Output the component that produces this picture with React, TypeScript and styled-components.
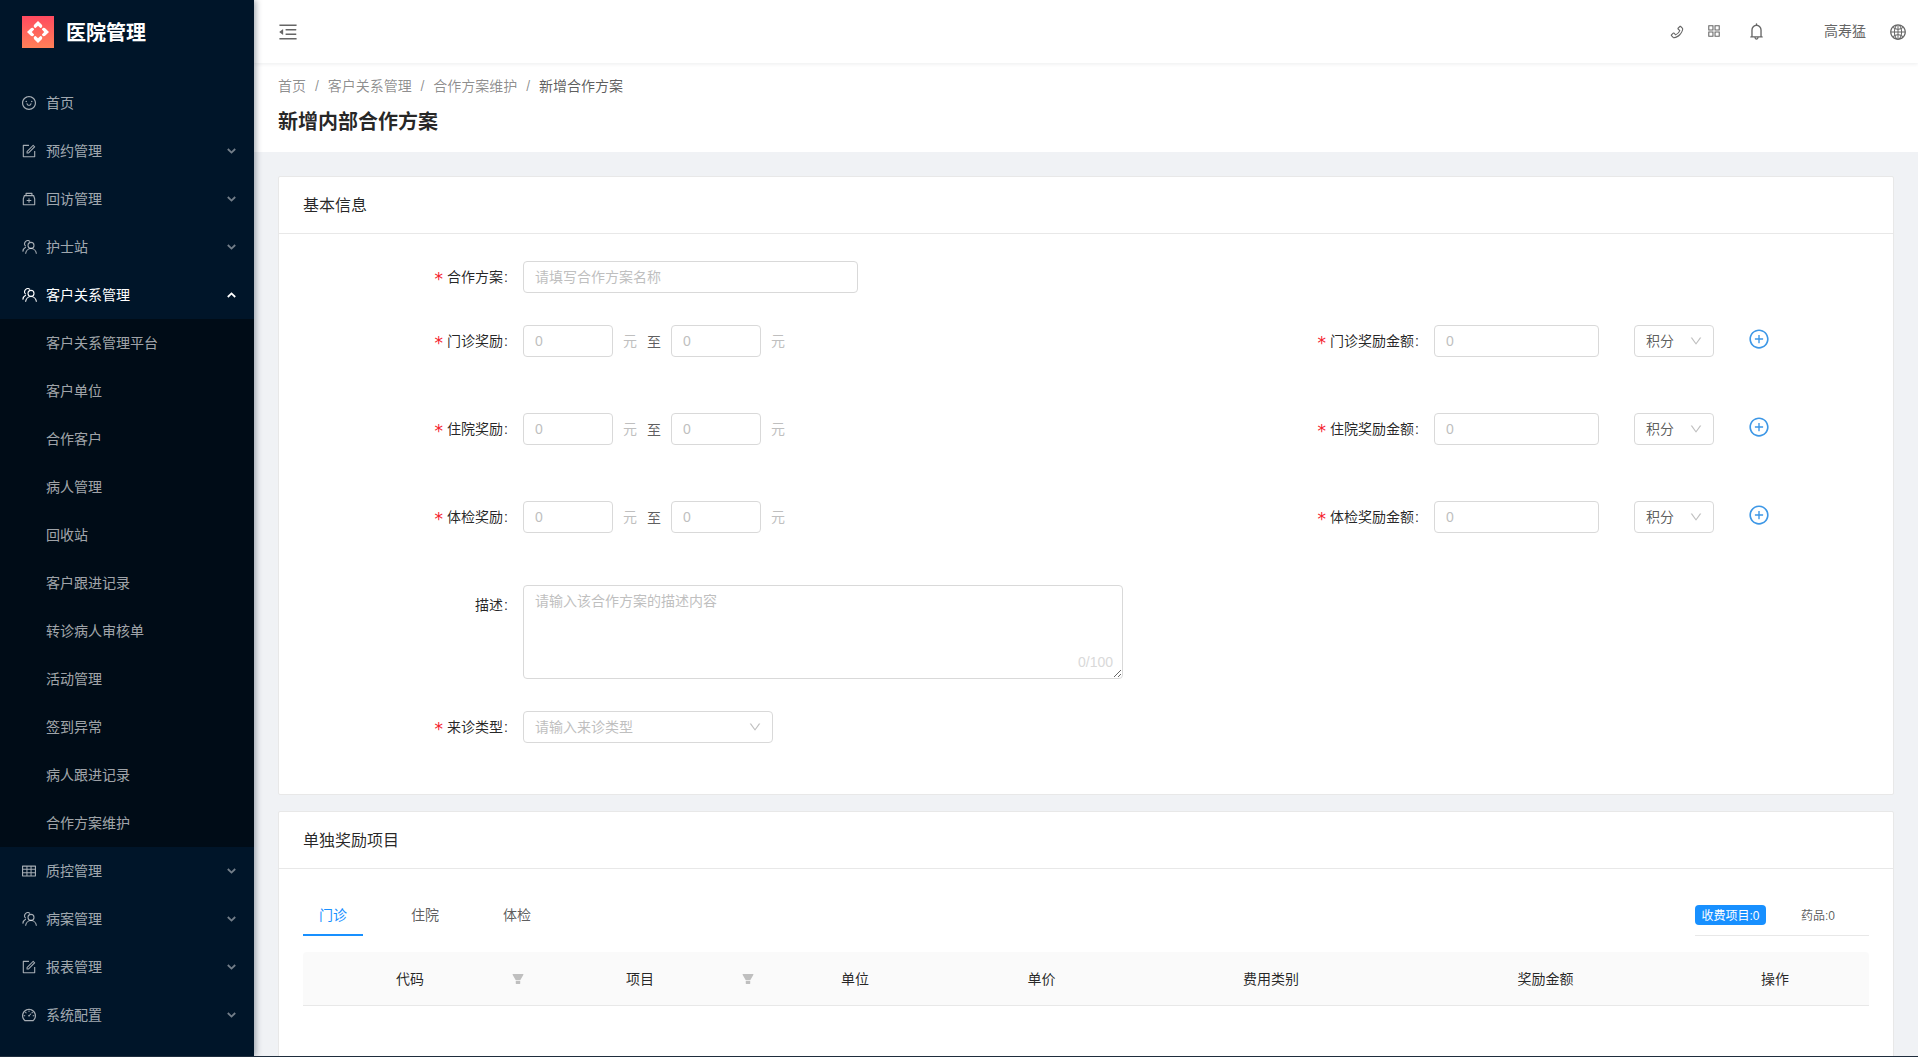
import React from "react";
import styled, { createGlobalStyle } from "styled-components";
import {
    AiFillFilter,
    AiOutlineAppstore,
    AiOutlineBell,
    AiOutlineDashboard,
    AiOutlineDown,
    AiOutlineForm,
    AiOutlineGlobal,
    AiOutlineMedicineBox,
    AiOutlineMenuFold,
    AiOutlinePhone,
    AiOutlinePlusCircle,
    AiOutlineSmile,
    AiOutlineTable,
} from "react-icons/ai";

const FONT = `"Liberation Sans", "Noto Sans CJK SC", sans-serif`;

const GlobalStyle = createGlobalStyle`
    html, body {
        margin: 0;
        padding: 0;
        height: 100%;
        overflow: hidden;
        background: #f0f2f5;
        font-family: ${FONT};
        font-size: 14px;
        color: rgba(0, 0, 0, 0.65);
    }
    * {
        box-sizing: border-box;
    }
`;

function PeopleIcon() {
    return (
        <svg width="15" height="15" viewBox="0 0 15 15" fill="none" stroke="currentColor" strokeWidth="1.1">
            <circle cx="9" cy="5.4" r="3" />
            <path d="M3.6 13.8c.3-2.9 2.5-5.3 5.4-5.3s5.1 2.4 5.4 5.3" />
            <path d="M8 1.5A3 3 0 0 0 3.7 6.2" />
            <path d="M3.9 6.9C2.2 7.8 1 9.6.8 11.6" />
        </svg>
    );
}

function Logo() {
    const petal =
        "M16 5l3.6 3.6c1 1 .9 2.7-.3 3.2l-.9.3L16 9.8l-2.4 2.3-.9-.3c-1.2-.5-1.3-2.2-.3-3.2z";
    return (
        <svg width="32" height="32" viewBox="0 0 32 32">
            <defs>
                <linearGradient id="logoBg" x1="0" y1="0" x2="0" y2="1">
                    <stop offset="0" stopColor="#ff4a60" />
                    <stop offset="1" stopColor="#ff8058" />
                </linearGradient>
            </defs>
            <rect width="32" height="32" fill="url(#logoBg)" />
            {[0, 90, 180, 270].map((deg) => (
                <path key={deg} d={petal} fill="#fff" transform={`rotate(${deg} 16 16)`} />
            ))}
        </svg>
    );
}

function MenuArrow({ open }: { open?: boolean }) {
    return (
        <ArrowBox $open={open}>
            <svg width="9" height="6" viewBox="0 0 9 6" fill="none" stroke="currentColor" strokeWidth="1.8">
                <path d="M.8 1l3.7 3.6L8.2 1" />
            </svg>
        </ArrowBox>
    );
}

const topMenusBefore = [
    { label: "首页", icon: <AiOutlineSmile />, arrow: false },
    { label: "预约管理", icon: <AiOutlineForm />, arrow: true },
    { label: "回访管理", icon: <AiOutlineMedicineBox />, arrow: true },
    { label: "护士站", icon: <PeopleIcon />, arrow: true },
];

const subMenus = [
    "客户关系管理平台",
    "客户单位",
    "合作客户",
    "病人管理",
    "回收站",
    "客户跟进记录",
    "转诊病人审核单",
    "活动管理",
    "签到异常",
    "病人跟进记录",
    "合作方案维护",
];

const topMenusAfter = [
    { label: "质控管理", icon: <AiOutlineTable />, arrow: true },
    { label: "病案管理", icon: <PeopleIcon />, arrow: true },
    { label: "报表管理", icon: <AiOutlineForm />, arrow: true },
    { label: "系统配置", icon: <AiOutlineDashboard />, arrow: true },
];

function SideMenu() {
    return (
        <Sider>
            <LogoRow>
                <Logo />
                <LogoText>医院管理</LogoText>
            </LogoRow>
            <MenuList>
                {topMenusBefore.map((m) => (
                    <MenuItem key={m.label}>
                        <MenuIcon>{m.icon}</MenuIcon>
                        <MenuText>{m.label}</MenuText>
                        {m.arrow && <MenuArrow />}
                    </MenuItem>
                ))}
                <MenuItem $active>
                    <MenuIcon>
                        <PeopleIcon />
                    </MenuIcon>
                    <MenuText>客户关系管理</MenuText>
                    <MenuArrow open />
                </MenuItem>
                <SubMenu>
                    {subMenus.map((s) => (
                        <SubMenuItem key={s}>{s}</SubMenuItem>
                    ))}
                </SubMenu>
                {topMenusAfter.map((m) => (
                    <MenuItem key={m.label}>
                        <MenuIcon>{m.icon}</MenuIcon>
                        <MenuText>{m.label}</MenuText>
                        {m.arrow && <MenuArrow />}
                    </MenuItem>
                ))}
            </MenuList>
        </Sider>
    );
}

function TopBar() {
    return (
        <Header>
            <FoldIcon>
                <AiOutlineMenuFold />
            </FoldIcon>
            <HeaderRight>
                <HeaderIcon $size={16} $left={0}>
                    <AiOutlinePhone />
                </HeaderIcon>
                <HeaderIcon $size={16} $left={21} $up={2}>
                    <AiOutlineAppstore />
                </HeaderIcon>
                <HeaderIcon $size={19} $left={25}>
                    <AiOutlineBell />
                </HeaderIcon>
                <UserName>高寿猛</UserName>
                <HeaderIcon $size={18} $left={23}>
                    <AiOutlineGlobal />
                </HeaderIcon>
            </HeaderRight>
        </Header>
    );
}

function RewardRow({ name, bottom }: { name: string; bottom: number }) {
    return (
        <FormRow $bottom={bottom}>
            <FieldLabel $required>{name}奖励</FieldLabel>
            <SmallInput placeholder="0" />
            <Unit>元</Unit>
            <Between>至</Between>
            <SmallInput placeholder="0" />
            <Unit>元</Unit>
            <RightGroup>
                <FieldLabel $required $width={169}>
                    {name}奖励金额
                </FieldLabel>
                <AmountInput placeholder="0" />
                <UnitSelect>
                    <SelectText>积分</SelectText>
                    <SelectArrow>
                        <AiOutlineDown />
                    </SelectArrow>
                </UnitSelect>
                <AddButton>
                    <AiOutlinePlusCircle />
                </AddButton>
            </RightGroup>
        </FormRow>
    );
}

function BaseInfoCard() {
    return (
        <Card>
            <CardTitle>基本信息</CardTitle>
            <FormBody>
                <FormRow $bottom={32}>
                    <FieldLabel $required>合作方案</FieldLabel>
                    <NameInput placeholder="请填写合作方案名称" />
                </FormRow>
                <RewardRow name="门诊" bottom={56} />
                <RewardRow name="住院" bottom={56} />
                <RewardRow name="体检" bottom={52} />
                <FormRow $bottom={32} $top>
                    <DescLabel>描述</DescLabel>
                    <TextAreaWrap>
                        <DescArea placeholder="请输入该合作方案的描述内容" />
                        <Counter>0/100</Counter>
                    </TextAreaWrap>
                </FormRow>
                <FormRow $bottom={0}>
                    <FieldLabel $required>来诊类型</FieldLabel>
                    <VisitSelect>
                        <SelectText>请输入来诊类型</SelectText>
                        <SelectArrow>
                            <AiOutlineDown />
                        </SelectArrow>
                    </VisitSelect>
                </FormRow>
            </FormBody>
        </Card>
    );
}

const columns = [
    { title: "代码", filter: true, pad: 16 },
    { title: "项目", filter: true, pad: 16 },
    { title: "单位", pad: 0 },
    { title: "单价", pad: 0 },
    { title: "费用类别", pad: 0 },
    { title: "奖励金额", pad: 0 },
    { title: "操作", pad: 4 },
];

function RewardItemsCard() {
    return (
        <Card>
            <CardTitle>单独奖励项目</CardTitle>
            <TableBody>
                <TabsRow>
                    <Tabs>
                        <Tab $active>门诊</Tab>
                        <Tab>住院</Tab>
                        <Tab>体检</Tab>
                    </Tabs>
                    <Counts>
                        <CountBadge>收费项目:0</CountBadge>
                        <CountText>药品:0</CountText>
                    </Counts>
                </TabsRow>
                <TableHead>
                    {columns.map((c) => (
                        <HeadCell key={c.title} $pad={c.pad}>
                            {c.title}
                            {c.filter && (
                                <FilterMark>
                                    <AiFillFilter />
                                </FilterMark>
                            )}
                        </HeadCell>
                    ))}
                </TableHead>
            </TableBody>
        </Card>
    );
}

export default function App() {
    return (
        <>
            <GlobalStyle />
            <Shell>
                <SideMenu />
                <Main>
                    <TopBar />
                    <PageHead>
                        <Breadcrumb>
                            <Crumb>首页</Crumb>
                            <Slash>/</Slash>
                            <Crumb>客户关系管理</Crumb>
                            <Slash>/</Slash>
                            <Crumb>合作方案维护</Crumb>
                            <Slash>/</Slash>
                            <Crumb $current>新增合作方案</Crumb>
                        </Breadcrumb>
                        <PageTitle>新增内部合作方案</PageTitle>
                    </PageHead>
                    <Content>
                        <BaseInfoCard />
                        <RewardItemsCard />
                    </Content>
                </Main>
            </Shell>
            <BottomEdge />
        </>
    );
}

const Shell = styled.div`
    display: flex;
    height: 1056px;
    overflow: hidden;
`;

const BottomEdge = styled.div`
    height: 1px;
    background: #1f2d3d;
`;

// 左侧菜单
const Sider = styled.aside`
    flex: 0 0 254px;
    background: #001529;
    color: rgba(255, 255, 255, 0.65);
    box-shadow: 2px 0 6px rgba(0, 21, 41, 0.35);
    position: relative;
    z-index: 2;
`;

const LogoRow = styled.div`
    display: flex;
    align-items: center;
    height: 63px;
    padding: 0 22px;
`;

const LogoText = styled.div`
    margin-left: 12px;
    font-size: 20px;
    font-weight: 700;
    color: #fff;
`;

const MenuList = styled.div`
    padding-top: 16px;
`;

const MenuItem = styled.div<{ $active?: boolean }>`
    display: flex;
    align-items: center;
    height: 48px;
    padding: 0 18px 0 21px;
    color: ${(props) => (props.$active ? "#fff" : "rgba(255, 255, 255, 0.65)")};
`;

const MenuIcon = styled.span`
    display: flex;
    align-items: center;
    justify-content: center;
    width: 16px;
    margin-right: 9px;
    font-size: 16px;
`;

const MenuText = styled.span`
    margin-bottom: 2px;
`;

const ArrowBox = styled.span<{ $open?: boolean }>`
    display: flex;
    margin-left: auto;
    color: ${(props) => (props.$open ? "#fff" : "rgba(255, 255, 255, 0.45)")};
    transform: ${(props) => (props.$open ? "rotate(180deg)" : "none")};
`;

const SubMenu = styled.div`
    background: #000c17;
`;

const SubMenuItem = styled.div`
    display: flex;
    align-items: center;
    height: 48px;
    padding: 0 0 2px 46px;
`;

// 顶部
const Main = styled.div`
    flex: 1;
    min-width: 0;
    display: flex;
    flex-direction: column;
`;

const Header = styled.header`
    flex: 0 0 63px;
    display: flex;
    align-items: center;
    justify-content: space-between;
    padding: 0 11px 0 25px;
    background: #fff;
    box-shadow: 0 1px 4px rgba(0, 21, 41, 0.08);
    position: relative;
    z-index: 1;
`;

const FoldIcon = styled.span`
    display: flex;
    font-size: 22px;
    margin-left: -2px;
    color: #666;
`;

const HeaderRight = styled.div`
    display: flex;
    align-items: center;
`;

const HeaderIcon = styled.span<{ $size: number; $left: number; $up?: number }>`
    display: flex;
    font-size: ${(props) => props.$size}px;
    margin-left: ${(props) => props.$left}px;
    margin-bottom: ${(props) => props.$up ?? 0}px;
    color: #666;
`;

const UserName = styled.span`
    margin-left: 58px;
    color: #666;
    line-height: 1;
    margin-bottom: 1px;
`;

const PageHead = styled.div`
    flex: 0 0 89px;
    padding: 12px 24px 0;
    background: #fff;
`;

const Breadcrumb = styled.div`
    display: flex;
    line-height: 22px;
`;

const Crumb = styled.span<{ $current?: boolean }>`
    color: ${(props) => (props.$current ? "rgba(0, 0, 0, 0.65)" : "rgba(0, 0, 0, 0.45)")};
`;

const Slash = styled.span`
    margin: 0 8.9px;
    color: rgba(0, 0, 0, 0.45);
`;

const PageTitle = styled.h1`
    margin: 9px 0 0;
    font-size: 20px;
    line-height: 32px;
    font-weight: 700;
    color: rgba(0, 0, 0, 0.85);
`;

const Content = styled.main`
    flex: 1;
    min-height: 0;
    padding: 24px 24px 0;
    display: flex;
    flex-direction: column;
    gap: 16px;
`;

// 卡片
const Card = styled.section`
    flex: none;
    background: #fff;
    border: 1px solid #e8e8e8;
    border-radius: 2px;
`;

const CardTitle = styled.div`
    height: 57px;
    padding: 0 0 2px 24px;
    display: flex;
    align-items: center;
    font-size: 16px;
    color: rgba(0, 0, 0, 0.85);
    border-bottom: 1px solid #e8e8e8;
`;

const FormBody = styled.div`
    padding: 27px 0 51px;
`;

const FormRow = styled.div<{ $bottom: number; $top?: boolean }>`
    display: flex;
    align-items: ${(props) => (props.$top ? "flex-start" : "center")};
    margin-bottom: ${(props) => props.$bottom}px;
`;

const FieldLabel = styled.label<{ $required?: boolean; $width?: number }>`
    flex: 0 0 ${(props) => props.$width ?? 229}px;
    text-align: right;
    margin-right: 15px;
    line-height: 32px;
    color: rgba(0, 0, 0, 0.85);
    &::before {
        content: ${(props) => (props.$required ? '"*"' : "none")};
        margin-right: 4px;
        color: #f5222d;
        font-family: "DejaVu Sans", sans-serif;
        font-size: 17px;
        line-height: 1;
        vertical-align: -3px;
    }
    &::after {
        content: ":";
        margin-left: 1px;
    }
`;

const DescLabel = styled(FieldLabel)`
    margin-top: 4px;
`;

const TextInput = styled.input`
    height: 32px;
    padding: 0 11px;
    border: 1px solid #d9d9d9;
    border-radius: 4px;
    outline: none;
    font-family: ${FONT};
    font-size: 14px;
    background: #fff;
    &::placeholder {
        color: #bfbfbf;
        opacity: 1;
    }
`;

const NameInput = styled(TextInput)`
    width: 335px;
`;

const SmallInput = styled(TextInput)`
    width: 90px;
`;

const AmountInput = styled(TextInput)`
    width: 165px;
`;

const Unit = styled.span`
    margin: 0 0 2px 10px;
    color: #bfbfbf;
`;

const Between = styled.span`
    margin: 0 10px 1px;
    color: rgba(0, 0, 0, 0.65);
`;

const RightGroup = styled.div`
    display: flex;
    align-items: center;
    margin-left: 465px;
`;

const SelectBox = styled.div`
    display: flex;
    align-items: center;
    justify-content: space-between;
    height: 32px;
    padding: 0 10px 0 11px;
    border: 1px solid #d9d9d9;
    border-radius: 4px;
    background: #fff;
`;

const SelectText = styled.span`
    margin-bottom: 2px;
`;

const UnitSelect = styled(SelectBox)`
    width: 80px;
    margin-left: 35px;
`;

const VisitSelect = styled(SelectBox)`
    width: 250px;
    color: #bfbfbf;
`;

const SelectArrow = styled.span`
    display: flex;
    font-size: 14px;
    color: #bfbfbf;
`;

const AddButton = styled.span`
    display: flex;
    margin: -4px 0 0 34px;
    font-size: 22px;
    color: #3d97e6;
`;

const TextAreaWrap = styled.div`
    position: relative;
    display: flex;
`;

const DescArea = styled.textarea`
    width: 600px;
    height: 94px;
    padding: 4px 11px;
    border: 1px solid #d9d9d9;
    border-radius: 4px;
    outline: none;
    font-family: ${FONT};
    font-size: 14px;
    line-height: 22px;
    &::placeholder {
        color: #bfbfbf;
        opacity: 1;
    }
`;

const Counter = styled.span`
    position: absolute;
    right: 10px;
    bottom: 9px;
    color: #d9d9d9;
    font-size: 14px;
`;

// 表格
const TableBody = styled.div`
    padding: 21px 24px 0;
    height: 400px;
`;

const TabsRow = styled.div`
    display: flex;
    justify-content: space-between;
`;

const Tabs = styled.div`
    display: flex;
    gap: 32px;
`;

const Tab = styled.div<{ $active?: boolean }>`
    width: 60px;
    padding: 14px 0 8px;
    text-align: center;
    line-height: 22px;
    color: ${(props) => (props.$active ? "#1890ff" : "rgba(0, 0, 0, 0.65)")};
    border-bottom: 2px solid ${(props) => (props.$active ? "#1890ff" : "transparent")};
`;

const Counts = styled.div`
    align-self: flex-end;
    width: 174px;
    height: 31px;
    display: flex;
    align-items: flex-start;
    border-bottom: 1px solid #e8e8e8;
    margin-bottom: 0;
`;

const CountBadge = styled.span`
    width: 71px;
    height: 20px;
    line-height: 22px;
    text-align: center;
    font-size: 12px;
    color: #fff;
    background: #1890ff;
    border-radius: 4px;
`;

const CountText = styled.span`
    margin-left: 35px;
    line-height: 22px;
    font-size: 12px;
    color: rgba(0, 0, 0, 0.65);
`;

const TableHead = styled.div`
    display: grid;
    grid-template-columns: 230px 230px 184px 189px 270px 279px 184px;
    height: 54px;
    margin-top: 16px;
    background: #fafafa;
    border-bottom: 1px solid #e8e8e8;
    border-radius: 4px 4px 0 0;
`;

const HeadCell = styled.div<{ $pad: number }>`
    position: relative;
    display: flex;
    align-items: center;
    justify-content: center;
    padding: 0 ${(props) => props.$pad}px 2px 0;
    color: rgba(0, 0, 0, 0.85);
`;

const FilterMark = styled.span`
    position: absolute;
    right: 8px;
    top: 20px;
    display: flex;
    font-size: 14px;
    color: #bfbfbf;
`;
